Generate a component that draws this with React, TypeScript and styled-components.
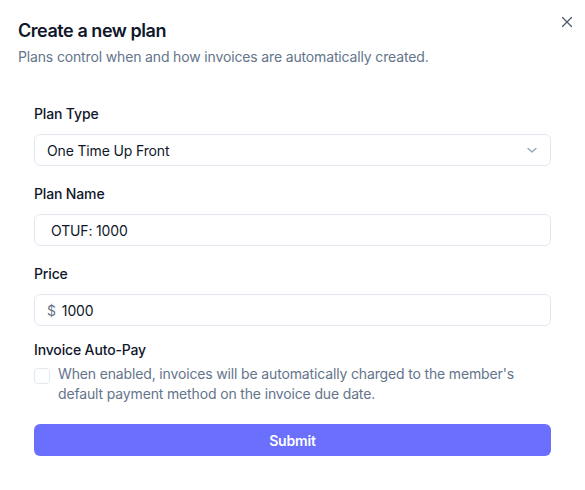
import React from "react";
import styled, { createGlobalStyle } from "styled-components";

const Global = createGlobalStyle`
  html, body { margin: 0; padding: 0; background: #ffffff; }
  body { font-family: Inter, "Noto Sans", sans-serif; color: #0f172a; -webkit-font-smoothing: antialiased; letter-spacing: -0.15px; }
  * { box-sizing: border-box; }
`;

const Dialog = styled.div`
  position: relative;
  width: 585px;
  height: 490px;
  padding: 17px 18px 0 18px;
  background: #fff;
`;

const Header = styled.div`
  display: flex;
  flex-direction: column;
  gap: 2px;
`;

const Title = styled.h2`
  margin: 0;
  font-size: 18px;
  line-height: 28px;
  font-weight: 600;
  letter-spacing: -0.45px;
  color: #0f172a;
`;

const Subtitle = styled.p`
  margin: 0;
  font-size: 14px;
  line-height: 20px;
  color: #64748b;
`;

const Close = styled.button`
  position: absolute;
  top: 15px;
  right: 11px;
  width: 14px;
  height: 14px;
  padding: 0;
  border: 0;
  background: transparent;
  color: #475569;
  display: flex;
  align-items: center;
  justify-content: center;
`;

const Form = styled.form`
  display: flex;
  flex-direction: column;
  padding: 37px 16px 0 16px;
  gap: 18px;
`;

const Field = styled.div<{ $tight?: boolean }>`
  display: flex;
  flex-direction: column;
  gap: ${(p) => (p.$tight ? 4 : 10)}px;
  margin-top: ${(p) => (p.$tight ? -4 : 0)}px;
`;

const Label = styled.label`
  font-size: 14px;
  line-height: 20px;
  font-weight: 500;
  color: #0f172a;
`;

const Box = styled.div<{ $pad?: number }>`
  height: 32px;
  display: flex;
  align-items: center;
  gap: 6px;
  padding: 0 12px 0 ${(p) => p.$pad ?? 12}px;
  border: 1px solid #e2e8f0;
  border-radius: 6px;
  font-size: 14px;
  color: #0f172a;
`;

const Value = styled.span`
  flex: 1;
`;

const Prefix = styled.span`
  color: #64748b;
`;

const CheckRow = styled.div`
  display: flex;
  align-items: flex-start;
  gap: 8px;
`;

const Checkbox = styled.span`
  flex: none;
  width: 16px;
  height: 16px;
  margin-top: 4px;
  border: 1px solid #e2e8f0;
  border-radius: 4px;
`;

const CheckText = styled.span`
  font-size: 14px;
  line-height: 20px;
  color: #64748b;
`;

const Submit = styled.button`
  height: 32px;
  margin-top: 2px;
  border: 0;
  border-radius: 6px;
  background: #6a6ffd;
  color: #fff;
  font-family: inherit;
  letter-spacing: -0.15px;
  font-size: 14px;
  font-weight: 600;
`;

export default function App() {
  return (
    <>
      <Global />
      <Dialog>
        <Header>
          <Title>Create a new plan</Title>
          <Subtitle>Plans control when and how invoices are automatically created.</Subtitle>
        </Header>
        <Close aria-label="Close">
          <svg width="12" height="12" viewBox="0 0 12 12" fill="none" stroke="currentColor" strokeWidth="1.2" strokeLinecap="round">
            <path d="M1.5 1.5l9 9M10.5 1.5l-9 9" />
          </svg>
        </Close>
        <Form onSubmit={(e) => e.preventDefault()}>
          <Field>
            <Label>Plan Type</Label>
            <Box>
              <Value>One Time Up Front</Value>
              <svg width="12" height="12" viewBox="0 0 12 12" fill="none" stroke="#94a3b8" strokeWidth="1.3" strokeLinecap="round" strokeLinejoin="round">
                <path d="M2 4.5l4 3.5 4-3.5" />
              </svg>
            </Box>
          </Field>
          <Field>
            <Label>Plan Name</Label>
            <Box $pad={16}>
              <Value>OTUF: 1000</Value>
            </Box>
          </Field>
          <Field>
            <Label>Price</Label>
            <Box>
              <Prefix>$</Prefix>
              <Value>1000</Value>
            </Box>
          </Field>
          <Field $tight>
            <Label>Invoice Auto-Pay</Label>
            <CheckRow>
              <Checkbox />
              <CheckText>
                When enabled, invoices will be automatically charged to the member's default payment method on the invoice due date.
              </CheckText>
            </CheckRow>
          </Field>
          <Submit type="submit">Submit</Submit>
        </Form>
      </Dialog>
    </>
  );
}
